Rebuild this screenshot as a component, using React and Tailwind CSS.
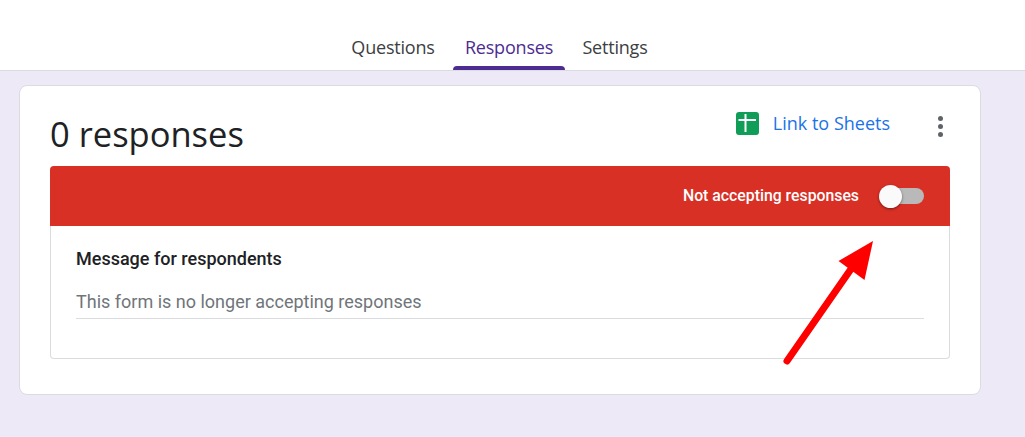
function SheetsIcon() {
  return (
    <svg width="23" height="23" viewBox="0 0 23 23" className="block">
      <rect width="23" height="23" rx="3" fill="#0f9d58" />
      <path d="M2.5 7h17.5v2h-17.5zM8.5 2h2v18h-2z" fill="#fff" />
    </svg>
  );
}

function Arrow() {
  return (
    <svg
      width="100"
      height="130"
      viewBox="780 238 100 130"
      className="absolute left-[780px] top-[238px] pointer-events-none"
    >
      <path d="M787 361L851 269" stroke="#ff0000" strokeWidth="7" strokeLinecap="round" fill="none" />
      <path d="M873 241L838.5 261L864.5 280Z" fill="#ff0000" />
    </svg>
  );
}

function Toggle() {
  return (
    <div className="relative w-[45px] h-[23px] flex items-center justify-end">
      <div className="w-[36px] h-4 rounded-full bg-[#b9b9b9]" />
      <div className="absolute left-0 top-0 w-[23px] h-[23px] rounded-full bg-[#fafafa] shadow-[0_1px_3px_rgba(0,0,0,0.45)]" />
    </div>
  );
}

export default function App() {
  return (
    <div className="relative h-[437px] w-[1025px] overflow-hidden bg-[#ede9f7] font-['Roboto',sans-serif]">
      <header className="h-[71px] bg-white border-b border-[#dadce0] pl-[337px]">
        <nav className="flex h-full font-['Open_Sans',sans-serif] text-[18px] leading-[24px] text-[#3c4043] tracking-[-0.2px]">
          <div className="w-[112px] flex justify-center pt-[35px]">Questions</div>
          <div className="relative w-[112px] ml-[4px] flex justify-center pt-[35px] text-[#4d2c91]">
            Responses
            <div className="absolute left-0 right-0 bottom-0 h-1 rounded-t bg-[#4d2c91]" />
          </div>
          <div className="w-[100px] flex justify-center pt-[35px]">Settings</div>
        </nav>
      </header>

      <main className="ml-[19px] mt-[14px] w-[962px] h-[310px] bg-white rounded-lg border border-[#dadce0] px-[30px]">
        <div className="h-[80px] flex items-start justify-between">
          <h1 className="mt-[25px] font-['Open_Sans',sans-serif] text-[34.5px] leading-[46px] text-[#202124]">
            0 responses
          </h1>
          <div className="flex items-center mt-[24px] mr-[7px]">
            <SheetsIcon />
            <span className="ml-[14px] -mt-px font-['Open_Sans',sans-serif] text-[18px] leading-[24px] text-[#1a73e8]">
              Link to Sheets
            </span>
            <div className="ml-[48px] mt-[6px] flex flex-col gap-[3px] items-center">
              <span className="w-[5px] h-[5px] rounded-full bg-[#5f6368]" />
              <span className="w-[5px] h-[5px] rounded-full bg-[#5f6368]" />
              <span className="w-[5px] h-[5px] rounded-full bg-[#5f6368]" />
            </div>
          </div>
        </div>

        <section className="h-[193px] rounded border border-[#dadce0] border-t-0">
          <div className="-mx-px h-[60px] rounded-t bg-[#d93025] flex items-center justify-end pr-[26px]">
            <span className="mr-5 text-[15.8px] font-medium text-white">Not accepting responses</span>
            <Toggle />
          </div>
          <div className="px-[25px]">
            <h2 className="mt-[21px] text-[18px] leading-[24px] font-medium text-[#202124]">
              Message for respondents
            </h2>
            <div className="mt-[19px] h-[29px] border-b border-[#dadce0] text-[18px] leading-[24px] text-[#70757a]">
              This form is no longer accepting responses
            </div>
          </div>
        </section>
      </main>

      <Arrow />
    </div>
  );
}
